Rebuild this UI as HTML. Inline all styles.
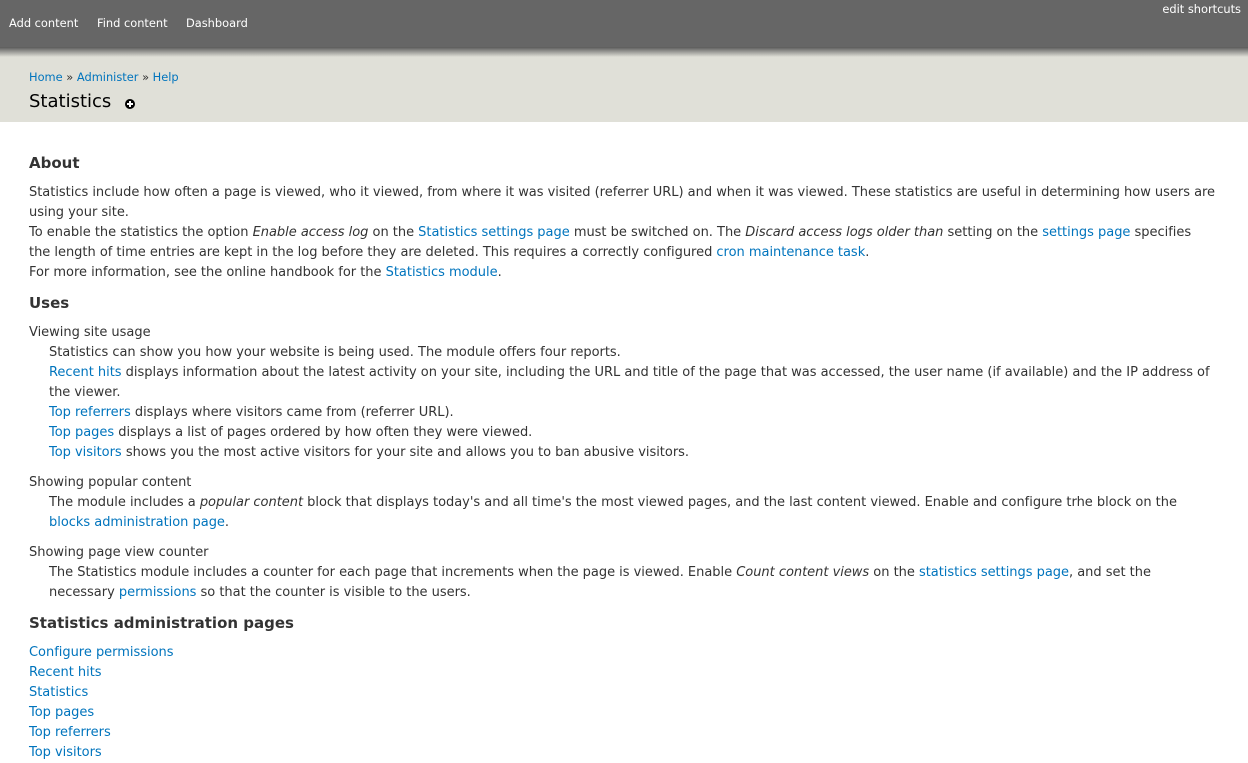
<!DOCTYPE html>
<html><head><meta charset="utf-8"><style>
*{margin:0;padding:0;box-sizing:border-box}
body{width:1248px;height:754px;overflow:hidden;background:#fff;font-family:"DejaVu Sans","Liberation Sans",sans-serif;font-size:13px;line-height:20px;color:#333}
a{color:#0074bd;text-decoration:none}
#tb{position:absolute;left:0;top:0;width:1248px;height:47px;background:#666;color:#fff}
#tb .m{position:absolute;top:13px;left:9px;font-size:11.4px}
#tb .m span{position:absolute;white-space:nowrap}
#tb .e{position:absolute;right:7px;top:-1px;font-size:11.4px}
#sh{position:absolute;top:47px;left:0;width:1248px;height:10px;background:linear-gradient(#5a5a5a,#e0e0d8)}
#hd{position:absolute;top:57px;left:0;width:1248px;height:65px;background:#e0e0d8}
#bc{position:absolute;left:29px;top:10px;font-size:11.4px;line-height:20px}
#bc i{font-style:normal;color:#333}
h1{position:absolute;left:29px;top:33px;font-size:18px;font-weight:normal;color:#000;line-height:24px}
.plus{position:absolute;left:125px;top:42px;width:10px;height:10px;border-radius:50%;background:#000}
.plus:before{content:"";position:absolute;left:2px;top:4px;width:6px;height:2px;background:#fff}
.plus:after{content:"";position:absolute;left:4px;top:2px;width:2px;height:6px;background:#fff}
#c{position:absolute;top:153px;left:29px;width:1190px;letter-spacing:-0.02px}
h2{font-size:15px;font-weight:bold;line-height:20px;margin:0 0 10px;letter-spacing:0}
p{margin:0 0 10px}
dd{margin:0 0 10px 20px}
</style></head><body>
<div id="tb"><div class="m"><span style="left:0">Add content</span><span style="left:88px">Find content</span><span style="left:177px">Dashboard</span></div><div class="e">edit shortcuts</div></div>
<div id="sh"></div>
<div id="hd"><div id="bc"><a>Home</a> <i>»</i> <a>Administer</a> <i>»</i> <a>Help</a></div><h1>Statistics</h1><div class="plus"></div></div>
<div id="c">
<h2>About</h2>
<p>Statistics include how often a page is viewed, who it viewed, from where it was visited (referrer URL) and when it was viewed. These statistics are useful in determining how users are using your site.<br>To enable the statistics the option <em>Enable access log</em> on the <a>Statistics settings page</a> must be switched on. The <em>Discard access logs older than</em> setting on the <a>settings page</a> specifies<br>the length of time entries are kept in the log before they are deleted. This requires a correctly configured <a>cron maintenance task</a>.<br>For more information, see the online handbook for the <a>Statistics module</a>.</p>
<h2>Uses</h2>
<dl>
<dt>Viewing site usage</dt>
<dd>Statistics can show you how your website is being used. The module offers four reports.<br><a>Recent hits</a> displays information about the latest activity on your site, including the URL and title of the page that was accessed, the user name (if available) and the IP address of<br>the viewer.<br><a>Top referrers</a> displays where visitors came from (referrer URL).<br><a>Top pages</a> displays a list of pages ordered by how often they were viewed.<br><a>Top visitors</a> shows you the most active visitors for your site and allows you to ban abusive visitors.</dd>
<dt>Showing popular content</dt>
<dd>The module includes a <em>popular content</em> block that displays today's and all time's the most viewed pages, and the last content viewed. Enable and configure trhe block on the<br><a>blocks administration page</a>.</dd>
<dt>Showing page view counter</dt>
<dd>The Statistics module includes a counter for each page that increments when the page is viewed. Enable <em>Count content views</em> on the <a>statistics settings page</a>, and set the<br>necessary <a>permissions</a> so that the counter is visible to the users.</dd>
</dl>
<h2>Statistics administration pages</h2>
<a>Configure permissions</a><br><a>Recent hits</a><br><a>Statistics</a><br><a>Top pages</a><br><a>Top referrers</a><br><a>Top visitors</a>
</div>
</body></html>
